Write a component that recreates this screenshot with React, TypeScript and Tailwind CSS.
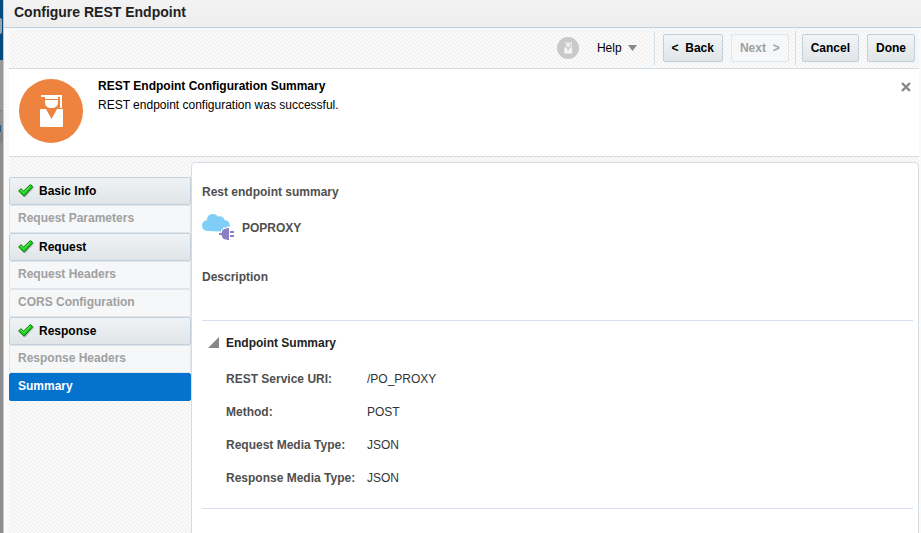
import React from "react";

type Step = { label: string; state: "done" | "disabled" | "current" };

const steps: Step[] = [
  { label: "Basic Info", state: "done" },
  { label: "Request Parameters", state: "disabled" },
  { label: "Request", state: "done" },
  { label: "Request Headers", state: "disabled" },
  { label: "CORS Configuration", state: "disabled" },
  { label: "Response", state: "done" },
  { label: "Response Headers", state: "disabled" },
  { label: "Summary", state: "current" },
];

const details: [string, string][] = [
  ["REST Service URI:", "/PO_PROXY"],
  ["Method:", "POST"],
  ["Request Media Type:", "JSON"],
  ["Response Media Type:", "JSON"],
];

function Graduate({ className, circle, ink }: { className: string; circle: string; ink: string }) {
  return (
    <svg viewBox="0 0 64 64" className={className} aria-hidden="true">
      <circle cx="32" cy="32" r="32" fill={circle} />
      <path d="M22 16h21v2H22z" fill={ink} />
      <path d="M26 18h13v2H26z" fill={ink} />
      <path d="M26 21h13v2q0 6-6.500 6T26 23z" fill={ink} />
      <path d="M41 17h2v12h-2z" fill={ink} />
      <path d="M22 30h5l5.500 10L38 30h5q1 0 1 1v16q0 1-1 1H22q-1 0-1-1V31q0-1 1-1z" fill={ink} />
    </svg>
  );
}

function Check() {
  return (
    <svg viewBox="0 0 16 14" className="h-[14px] w-4 shrink-0" aria-hidden="true">
      <path d="M1.500 8.500L4 6l3 2.500L14 2l2 1.500L7 13.500z" fill="#a9adb0" />
      <path d="M.6 6.900L3 4.700l2.600 2.400L12.300.6l2.500 2L6 12.200z" fill="#16d016" stroke="#0a7a0a" strokeWidth="1" />
      <path d="M2.200 6.800l.9-.7 2.600 2.500L12.400 2" fill="none" stroke="#7cf77c" strokeWidth=".8" />
    </svg>
  );
}

function CloudPlug() {
  return (
    <svg viewBox="0 0 32 28" className="h-7 w-8" aria-hidden="true">
      <path
        d="M5 17q-5-1-5-5.500Q0 7 5 6q0-4.500 4-5.700 4.500-1 7 2.200 5-1 6.500 3.500 5 .5 5.500 5.500v1h-3v1h-4v2h-2v2z"
        fill="#80cdf7"
      />
      <path
        d="M17 19h2.500q.5-3 2.500-4 1-.5 3-.5V14h2v12h-2v-.5q-2 0-3-.5-2-1-2.500-4H17zM28 17h4v2h-4zM28 21h4v2h-4z"
        fill="#8b80c3"
      />
    </svg>
  );
}

const hatch =
  "bg-[#fafafa] bg-[linear-gradient(45deg,#f1f1f1_25%,#fcfcfc_25%,#fcfcfc_50%,#f1f1f1_50%,#f1f1f1_75%,#fcfcfc_75%)] bg-[length:4px_4px]";

const button =
  "h-7 rounded-xs border border-[#c3cfd9] bg-linear-to-b from-[#f2f5f7] to-[#e0e5e8] px-2 font-bold whitespace-pre text-black";

export default function App() {
  return (
    <div className="flex min-h-screen bg-[#fafafa] font-['Liberation_Sans',Arial,sans-serif] text-xs leading-4 text-black">
      <div className="flex w-[3px] shrink-0 flex-col bg-[#8e8e8e]" aria-hidden="true">
        <div className="flex h-[60px] items-center bg-[#044a7c]">
          <span className="mb-2 h-4 w-[2px] rounded-r-full bg-[#9aa4ac]" />
        </div>
        <div className="h-[50px] bg-[#989898]" />
        <div className="h-[15px] border-t border-[#85827e] bg-[#929292]" />
        <div className="h-[7px] w-px bg-[#1c5d8c]" />
        <div className="h-[11px] bg-[#848484]" />
      </div>

      <main className="flex min-w-0 flex-1 flex-col border-l border-[#c5cbd0]">
        <header className="h-7 border-b border-[#c3cfd9] bg-linear-to-b from-[#f3f3f3] to-[#eeeeee] px-[10px] pt-1">
          <h1 className="text-sm leading-4 font-bold text-[#222222]">Configure REST Endpoint</h1>
        </header>

        <div className="mr-[2px] ml-[5px] flex flex-1 flex-col">
          <div className={`flex h-[41px] items-center justify-end border-b border-[#d3dde6] pr-1 ${hatch}`}>
            <Graduate className="size-[22px]" circle="#c9c9c9" ink="#f4f4f4" />
            <button type="button" className="ml-[18px] flex items-center gap-[6px]">
              Help
              <svg viewBox="0 0 9 6" className="h-[6px] w-[9px]" aria-hidden="true">
                <path d="M0 0h9L4.500 6z" fill="#85898c" />
              </svg>
            </button>
            <span className="mr-2 ml-[17px] h-[34px] w-px bg-[#d3dde6]" />
            <button type="button" className={button}>{"<  Back"}</button>
            <button
              type="button"
              disabled
              className="ml-2 h-7 rounded-xs border border-[#dfe5ea] bg-[#f5f7f8] px-2 font-bold whitespace-pre text-[#a0a0a0]"
            >
              {"Next  >"}
            </button>
            <span className="mx-[6px] h-[34px] w-px bg-[#d3dde6]" />
            <button type="button" className={button}>Cancel</button>
            <button type="button" className={`ml-2 ${button}`}>Done</button>
          </div>

          <section className="flex h-[88px] items-start border-b border-[#d3dde6] bg-white pt-[9px] pr-2 pl-[10px]">
            <Graduate className="mt-px size-16 shrink-0" circle="#ee823f" ink="#ffffff" />
            <div className="ml-[15px] flex-1">
              <h2 className="font-bold">REST Endpoint Configuration Summary</h2>
              <p className="mt-[3px]">REST endpoint configuration was successful.</p>
            </div>
            <button type="button" aria-label="Close" className="mt-1">
              <svg viewBox="0 0 10 10" className="size-[10px]" aria-hidden="true">
                <path d="M1 1l8 8M9 1L1 9" stroke="#85898c" strokeWidth="2.400" />
              </svg>
            </button>
          </section>

          <div className={`flex flex-1 pt-[5px] ${hatch}`}>
            <nav className="w-[182px] shrink-0 pt-[15px]" aria-label="Steps">
              {steps.map((s) =>
                s.state === "done" ? (
                  <button
                    key={s.label}
                    type="button"
                    className="flex h-7 w-full items-center gap-[5px] rounded-xs border border-[#c3cfd9] bg-linear-to-b from-[#f0f3f5] to-[#e0e5e8] pl-2 font-bold"
                  >
                    <Check />
                    {s.label}
                  </button>
                ) : s.state === "disabled" ? (
                  <button
                    key={s.label}
                    type="button"
                    disabled
                    className="flex h-7 w-full items-center rounded-xs border border-[#dfe5ea] bg-[#f5f7f8] pb-[2px] pl-2 font-bold text-[#a0a0a0]"
                  >
                    {s.label}
                  </button>
                ) : (
                  <button
                    key={s.label}
                    type="button"
                    aria-current="step"
                    className="flex h-7 w-full items-center rounded-xs border border-[#0572ce] bg-[#0572ce] pb-[2px] pl-2 font-bold text-white"
                  >
                    {s.label}
                  </button>
                ),
              )}
            </nav>

            <section className="min-w-0 flex-1 rounded-t-[5px] border border-b-0 border-[#d3dde6] bg-white pr-[5px] pl-[10px] text-[#4f4f4f]">
              <h2 className="mt-[21px] font-bold">Rest endpoint summary</h2>
              <div className="mt-[14px] flex h-7 items-center gap-2">
                <CloudPlug />
                <span className="font-bold">POPROXY</span>
              </div>
              <h3 className="mt-[27px] font-bold">Description</h3>
              <div className="mt-[35px] border-y border-[#d6def5] pt-[14px] pb-[22px] pl-[6px]">
                <button type="button" aria-expanded="true" className="flex items-center gap-[7px] font-bold text-[#222222]">
                  <svg viewBox="0 0 11 11" className="mb-[2px] size-[11px]" aria-hidden="true">
                    <path d="M11 0v11H0z" fill="#85898c" />
                  </svg>
                  Endpoint Summary
                </button>
                <dl className="mt-5 ml-[18px] grid grid-cols-[141px_1fr] gap-y-[17px]">
                  {details.map(([k, v]) => (
                    <React.Fragment key={k}>
                      <dt className="font-bold">{k}</dt>
                      <dd className="text-[#333333]">{v}</dd>
                    </React.Fragment>
                  ))}
                </dl>
              </div>
            </section>
          </div>
        </div>
      </main>
    </div>
  );
}
